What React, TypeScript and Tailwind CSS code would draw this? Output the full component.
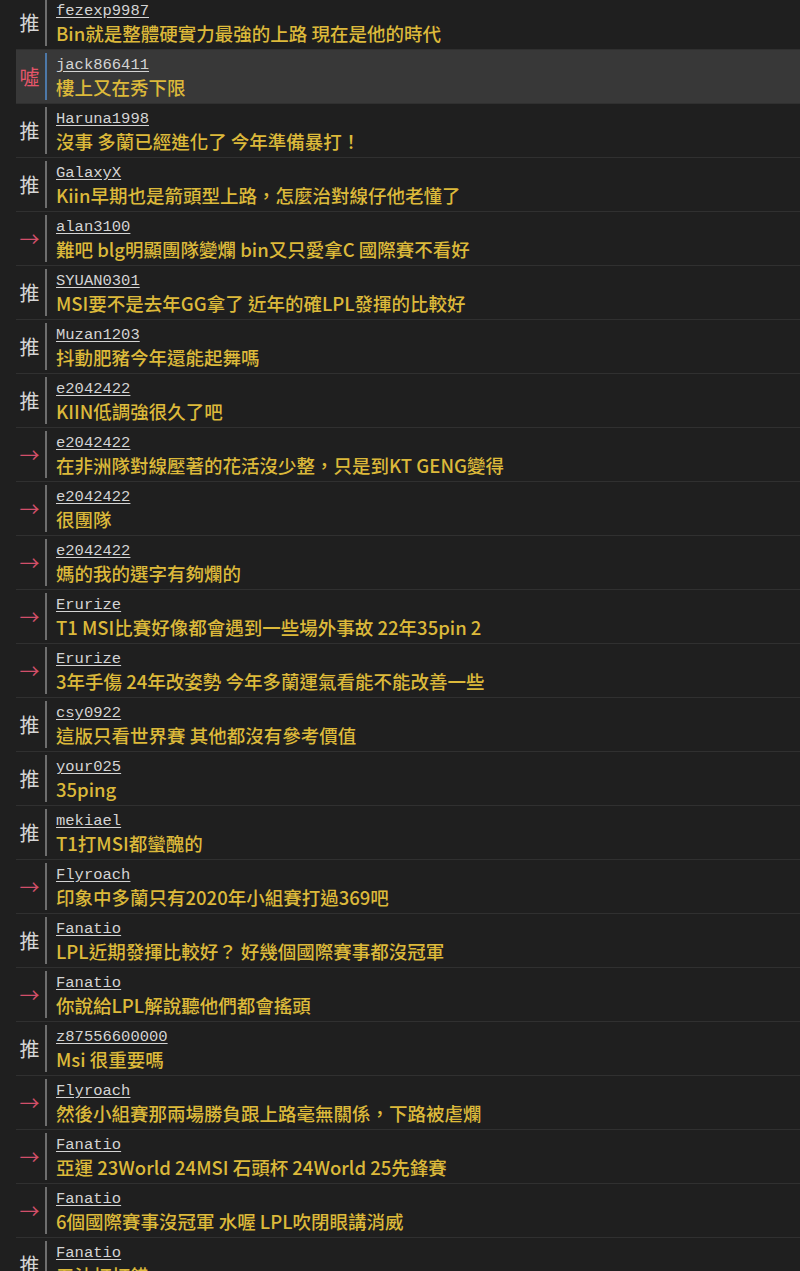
// PTT 推文列表：標籤（推／噓／→）+ 帳號 + 推文內容

type Push = { tag: "推" | "噓" | "→"; user: string; text: string; active?: boolean };

const PUSHES: Push[] = [
  { tag: "推", user: "fezexp9987", text: "Bin就是整體硬實力最強的上路 現在是他的時代" },
  { tag: "噓", user: "jack866411", text: "樓上又在秀下限", active: true },
  { tag: "推", user: "Haruna1998", text: "沒事 多蘭已經進化了 今年準備暴打！" },
  { tag: "推", user: "GalaxyX", text: "Kiin早期也是箭頭型上路，怎麼治對線仔他老懂了" },
  { tag: "→", user: "alan3100", text: "難吧 blg明顯團隊變爛 bin又只愛拿C 國際賽不看好" },
  { tag: "推", user: "SYUAN0301", text: "MSI要不是去年GG拿了 近年的確LPL發揮的比較好" },
  { tag: "推", user: "Muzan1203", text: "抖動肥豬今年還能起舞嗎" },
  { tag: "推", user: "e2042422", text: "KIIN低調強很久了吧" },
  { tag: "→", user: "e2042422", text: "在非洲隊對線壓著的花活沒少整，只是到KT GENG變得" },
  { tag: "→", user: "e2042422", text: "很團隊" },
  { tag: "→", user: "e2042422", text: "媽的我的選字有夠爛的" },
  { tag: "→", user: "Erurize", text: "T1 MSI比賽好像都會遇到一些場外事故 22年35pin 2" },
  { tag: "→", user: "Erurize", text: "3年手傷 24年改姿勢 今年多蘭運氣看能不能改善一些" },
  { tag: "推", user: "csy0922", text: "這版只看世界賽 其他都沒有參考價值" },
  { tag: "推", user: "your025", text: "35ping" },
  { tag: "推", user: "mekiael", text: "T1打MSI都蠻醜的" },
  { tag: "→", user: "Flyroach", text: "印象中多蘭只有2020年小組賽打過369吧" },
  { tag: "推", user: "Fanatio", text: "LPL近期發揮比較好？ 好幾個國際賽事都沒冠軍" },
  { tag: "→", user: "Fanatio", text: "你說給LPL解說聽他們都會搖頭" },
  { tag: "推", user: "z87556600000", text: "Msi 很重要嗎" },
  { tag: "→", user: "Flyroach", text: "然後小組賽那兩場勝負跟上路毫無關係，下路被虐爛" },
  { tag: "→", user: "Fanatio", text: "亞運 23World 24MSI 石頭杯 24World 25先鋒賽" },
  { tag: "→", user: "Fanatio", text: "6個國際賽事沒冠軍 水喔 LPL吹閉眼講消威" },
  { tag: "推", user: "Fanatio", text: "五油打打錯" },
];

const CJK = "font-['Noto_Sans_CJK_TC','Noto_Sans',sans-serif]";

function PushRow({ p }: { p: Push }) {
  const tagColor = p.tag === "推" ? "text-[#d6d6d6]" : p.tag === "噓" ? "text-[#e5566a]" : "text-[#d24f69]";
  return (
    <div className={`flex h-[54px] border-b border-[#303030] ${p.active ? "bg-[#383838]" : ""}`}>
      <div className={`flex w-[27px] shrink-0 items-center justify-center text-[20px] ${tagColor} ${CJK}`}>
        {p.tag}
      </div>
      <div className="w-[2px] shrink-0" />
      <div className={`my-[3px] w-[2px] shrink-0 ${p.active ? "bg-[#4d78a8]" : "bg-[#6e6e6e]"}`} />
      <div className="flex min-w-0 flex-col pl-[9px] pt-[5px]">
        <span className="h-5 font-['Liberation_Mono',monospace] text-[15.5px] leading-5 text-[#d4d4d4] underline underline-offset-2">
          {p.user}
        </span>
        <span className={`-mt-[1px] whitespace-nowrap text-[18.5px] leading-[26px] font-medium text-[#dcb93a] ${CJK}`}>
          {p.text}
        </span>
      </div>
    </div>
  );
}

export default function App() {
  return (
    <div className="h-[1271px] overflow-hidden bg-[#1f1f1f]">
      <div className="-mt-1 pl-4">
        {PUSHES.map((p, i) => (
          <PushRow key={i} p={p} />
        ))}
      </div>
    </div>
  );
}
